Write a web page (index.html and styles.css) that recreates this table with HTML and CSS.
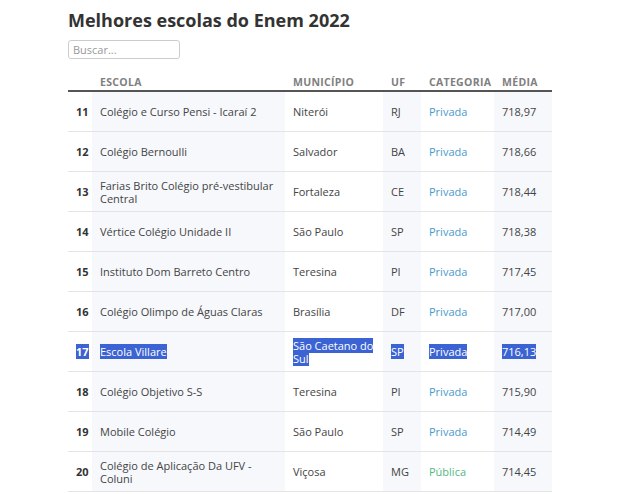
FILE: index.html
```html
<!DOCTYPE html>
<html lang="pt-BR">
<head>
  <meta charset="UTF-8">
  <title>Melhores escolas do Enem 2022</title>
  <link rel="stylesheet" href="styles.css">
</head>
<body>
  <div class="wrap">
    <h1>Melhores escolas do Enem 2022</h1>
    <input type="text" class="search" placeholder="Buscar...">

    <table class="ranking">
      <thead>
        <tr>
          <th class="c-rank"></th>
          <th class="c-escola">Escola</th>
          <th class="c-mun">Município</th>
          <th class="c-uf">UF</th>
          <th class="c-cat">Categoria</th>
          <th class="c-media">Média</th>
        </tr>
      </thead>
      <tbody>
        <tr>
          <td class="c-rank">11</td>
          <td class="c-escola">Colégio e Curso Pensi - Icaraí 2</td>
          <td class="c-mun">Niterói</td>
          <td class="c-uf">RJ</td>
          <td class="c-cat privada">Privada</td>
          <td class="c-media">718,97</td>
        </tr>
        <tr>
          <td class="c-rank">12</td>
          <td class="c-escola">Colégio Bernoulli</td>
          <td class="c-mun">Salvador</td>
          <td class="c-uf">BA</td>
          <td class="c-cat privada">Privada</td>
          <td class="c-media">718,66</td>
        </tr>
        <tr>
          <td class="c-rank">13</td>
          <td class="c-escola">Farias Brito Colégio pré-vestibular Central</td>
          <td class="c-mun">Fortaleza</td>
          <td class="c-uf">CE</td>
          <td class="c-cat privada">Privada</td>
          <td class="c-media">718,44</td>
        </tr>
        <tr>
          <td class="c-rank">14</td>
          <td class="c-escola">Vértice Colégio Unidade II</td>
          <td class="c-mun">São Paulo</td>
          <td class="c-uf">SP</td>
          <td class="c-cat privada">Privada</td>
          <td class="c-media">718,38</td>
        </tr>
        <tr>
          <td class="c-rank">15</td>
          <td class="c-escola">Instituto Dom Barreto Centro</td>
          <td class="c-mun">Teresina</td>
          <td class="c-uf">PI</td>
          <td class="c-cat privada">Privada</td>
          <td class="c-media">717,45</td>
        </tr>
        <tr>
          <td class="c-rank">16</td>
          <td class="c-escola">Colégio Olimpo de Águas Claras</td>
          <td class="c-mun">Brasília</td>
          <td class="c-uf">DF</td>
          <td class="c-cat privada">Privada</td>
          <td class="c-media">717,00</td>
        </tr>
        <tr class="selected">
          <td class="c-rank"><span class="sel">17</span></td>
          <td class="c-escola"><span class="sel">Escola Villare</span></td>
          <td class="c-mun"><span class="sel">São Caetano do Sul</span></td>
          <td class="c-uf"><span class="sel">SP</span></td>
          <td class="c-cat privada"><span class="sel">Privada</span></td>
          <td class="c-media"><span class="sel">716,13</span></td>
        </tr>
        <tr>
          <td class="c-rank">18</td>
          <td class="c-escola">Colégio Objetivo S-S</td>
          <td class="c-mun">Teresina</td>
          <td class="c-uf">PI</td>
          <td class="c-cat privada">Privada</td>
          <td class="c-media">715,90</td>
        </tr>
        <tr>
          <td class="c-rank">19</td>
          <td class="c-escola">Mobile Colégio</td>
          <td class="c-mun">São Paulo</td>
          <td class="c-uf">SP</td>
          <td class="c-cat privada">Privada</td>
          <td class="c-media">714,49</td>
        </tr>
        <tr>
          <td class="c-rank">20</td>
          <td class="c-escola">Colégio de Aplicação Da UFV - Coluni</td>
          <td class="c-mun">Viçosa</td>
          <td class="c-uf">MG</td>
          <td class="c-cat publica">Pública</td>
          <td class="c-media">714,45</td>
        </tr>
      </tbody>
    </table>
  </div>
</body>
</html>
```

FILE: styles.css
```css
body {
  margin: 0;
  background-color: #ffffff;
  color: #333333;
  font-family: "Open Sans", Arial, sans-serif;
}
.wrap { padding: 8px 0 0 68px; }
h1 {
  margin: 0;
  font-size: 18px;
  font-weight: 700;
  color: #333333;
  line-height: 24px;
}
.search {
  display: block;
  margin-top: 8px;
  width: 112px;
  height: 19px;
  box-sizing: border-box;
  padding: 0 4px;
  border: 1px solid #cccccc;
  border-radius: 3px;
  font-family: "Open Sans", Arial, sans-serif;
  font-size: 11px;
  color: #333;
}
.search::placeholder { color: #999999; }
.ranking {
  margin-top: 7px;
  width: 484px;
  border-collapse: collapse;
  table-layout: fixed;
  font-size: 11px;
}
.ranking th {
  height: 23px;
  padding: 0 8px 1px;
  text-align: left;
  vertical-align: bottom;
  font-size: 10.5px;
  font-weight: 700;
  text-transform: uppercase;
  letter-spacing: 0.3px;
  color: #808080;
  border-bottom: 2px solid #555555;
}
.ranking td {
  height: 39px;
  padding: 0 8px;
  line-height: 13px;
  color: #444444;
  border-bottom: 1px solid #e4e4e4;
}
.c-rank { width: 8px; }
.c-escola { width: 177px; }
.c-mun { width: 82px; }
.c-uf { width: 22px; }
.c-cat { width: 57px; }
.c-media { width: 42px; }
td.c-rank { font-weight: 700; color: #333333; }
td.c-escola, td.c-uf, td.c-media { background-color: #f6f8fb; }
td.privada { color: #4a9bcc; }
td.publica { color: #55b883; }
.selected td { color: #ffffff; }
.sel { background-color: #3b63d3; color: #ffffff; }
```
